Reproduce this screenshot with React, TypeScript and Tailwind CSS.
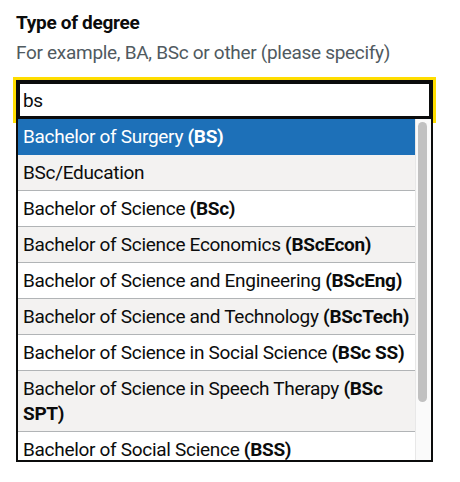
const options = [
  { name: "Bachelor of Surgery", abbr: "BS" },
  { name: "BSc/Education" },
  { name: "Bachelor of Science", abbr: "BSc" },
  { name: "Bachelor of Science Economics", abbr: "BScEcon" },
  { name: "Bachelor of Science and Engineering", abbr: "BScEng" },
  { name: "Bachelor of Science and Technology", abbr: "BScTech" },
  { name: "Bachelor of Science in Social Science", abbr: "BSc SS" },
  { name: "Bachelor of Science in Speech Therapy", abbr: "BSc SPT" },
  { name: "Bachelor of Social Science", abbr: "BSS" },
  { name: "Bachelor of Social Work", abbr: "BSW" },
  { name: "Bachelor of Surveying", abbr: "BSurv" },
];

const App = () => {
  return (
    <main className="min-h-screen bg-white pl-4 pt-[10px] font-['Roboto',Arial,sans-serif] tracking-[-0.3px] text-[#0b0c0c]">
      <label htmlFor="degree" className="block mb-[5px] text-[19px] leading-[25px] font-bold">
        Type of degree
      </label>
      <div className="mb-[15px] text-[19px] leading-[25px] text-[#505a5f]">
        For example, BA, BSc or other (please specify)
      </div>
      <div className="relative w-[417px]">
        <input
          id="degree"
          value="bs"
          readOnly
          className="block h-10 w-full border-2 border-[#0b0c0c] px-[5px] text-[19px] tracking-[-0.3px] shadow-[inset_0_0_0_2px_#0b0c0c] outline-3 outline-solid outline-[#ffdd00]"
        />
        {/* menu overlays the page below the input */}
        <div className="absolute left-0 top-[39px] z-10 flex h-[343px] w-full overflow-hidden border-2 border-t-0 border-[#0b0c0c] bg-white">
          <ul className="flex-1 overflow-hidden">
            {options.map((opt, index) => (
              <li
                key={index}
                className={
                  index === 0
                    ? "border-b border-[#1d70b8] bg-[#1d70b8] p-[5px] text-[19px] leading-[25px] text-white"
                    : index % 2 === 1
                    ? "border-b border-[#b1b4b6] bg-[#f3f2f1] p-[5px] text-[19px] leading-[25px]"
                    : "border-b border-[#b1b4b6] bg-white p-[5px] text-[19px] leading-[25px]"
                }
              >
                {opt.name}
                {opt.abbr && <strong className="font-bold"> ({opt.abbr})</strong>}
              </li>
            ))}
          </ul>
          <div className="w-4 shrink-0 border-l border-[#e8e8e8] bg-[#fafafa] pt-[3px] pl-[2px]">
            <div className="h-[280px] w-[9px] rounded-full bg-[#c1c1c1]" />
          </div>
        </div>
      </div>
    </main>
  );
};

export default App;
